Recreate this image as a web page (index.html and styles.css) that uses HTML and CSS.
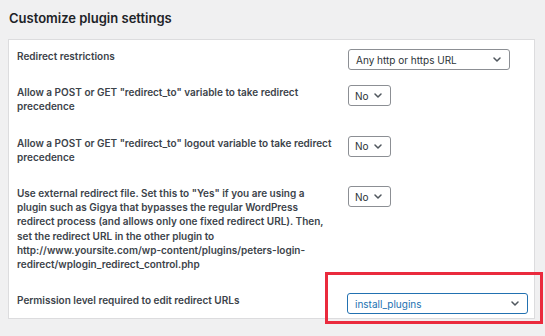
FILE: index.html
```html
<!DOCTYPE html>
<html>
<head>
<meta charset="utf-8">
<link rel="stylesheet" href="styles.css">
</head>
<body>
<div class="page">
  <h2 class="title">Customize plugin settings</h2>
  <div class="panel">
    <div class="row">
      <div class="label">Redirect restrictions</div>
      <div class="field">
        <div class="select select-wide"><span>Any http or https URL</span><svg class="chev" viewBox="0 0 8 5" width="8" height="5"><polyline points="1,1 4,4 7,1"/></svg></div>
      </div>
    </div>
    <div class="row">
      <div class="label">Allow a POST or GET "redirect_to" variable to take redirect precedence</div>
      <div class="field">
        <div class="select select-small"><span>No</span><svg class="chev" viewBox="0 0 8 5" width="8" height="5"><polyline points="1,1 4,4 7,1"/></svg></div>
      </div>
    </div>
    <div class="row">
      <div class="label">Allow a POST or GET "redirect_to" logout variable to take redirect precedence</div>
      <div class="field">
        <div class="select select-small"><span>No</span><svg class="chev" viewBox="0 0 8 5" width="8" height="5"><polyline points="1,1 4,4 7,1"/></svg></div>
      </div>
    </div>
    <div class="row">
      <div class="label">Use external redirect file. Set this to "Yes" if you are using a plugin such as Gigya that bypasses the regular WordPress redirect process (and allows only one fixed redirect URL). Then, set the redirect URL in the other plugin to http://www.yoursite.com/wp-content/plugins/peters-login-redirect/wplogin_redirect_control.php</div>
      <div class="field">
        <div class="select select-small"><span>No</span><svg class="chev" viewBox="0 0 8 5" width="8" height="5"><polyline points="1,1 4,4 7,1"/></svg></div>
      </div>
    </div>
    <div class="row row-last">
      <div class="label">Permission level required to edit redirect URLs</div>
      <div class="field">
        <div class="select select-focus"><span>install_plugins</span><svg class="chev" viewBox="0 0 8 5" width="8" height="5"><polyline points="1,1 4,4 7,1"/></svg></div>
      </div>
    </div>
  </div>
  <div class="highlight"></div>
</div>
</body>
</html>
```
FILE: styles.css
```css
html, body {
  margin: 0;
  padding: 0;
  background: #f0f0f1;
}
body {
  font-family: Inter, Roboto, "Liberation Sans", sans-serif;
  color: #3c434a;
}
.page {
  position: relative;
  padding: 8px 0 0 8px;
  width: 537px;
  height: 328px;
}
.title {
  margin: 0 0 10px 1px;
  font-size: 13px;
  line-height: 21px;
  font-weight: 600;
  color: #1d2327;
}
.panel {
  width: 525px;
  background: #fff;
  border: 1px solid #dcdcde;
  padding-top: 1px;
}
.row {
  display: grid;
  grid-template-columns: 339px 1fr;
  align-items: start;
}
.label {
  padding: 8px 15px 14px 8px;
  font-size: 10px;
  line-height: 14.2px;
  font-weight: 600;
  color: #3c434a;
}
.row-last .label {
  padding-bottom: 11px;
}
.field {
  padding-top: 8px;
}
.select {
  box-sizing: border-box;
  height: 21px;
  display: flex;
  align-items: center;
  justify-content: space-between;
  border: 1px solid #8c8f94;
  border-radius: 3px;
  background: #fff;
  padding: 0 8px 0 7px;
  font-size: 10px;
  color: #2c3338;
}
.select-wide {
  width: 162px;
}
.select-small {
  width: 43px;
  padding-left: 6px;
}
.select-focus {
  width: 181px;
  margin-left: -1px;
  border-color: #2271b1;
  color: #2271b1;
}
.chev {
  fill: none;
  stroke: #50575e;
  stroke-width: 1.5;
  stroke-linecap: round;
  stroke-linejoin: round;
}
.highlight {
  position: absolute;
  left: 325px;
  top: 272px;
  width: 212px;
  height: 46px;
  border: 3px solid #ea2a3d;
}
```
